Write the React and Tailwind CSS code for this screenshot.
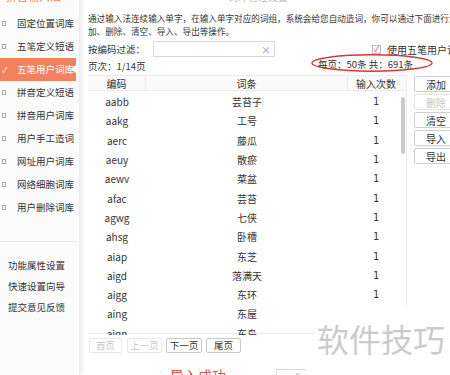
import React from 'react'

const font = '"Noto Sans CJK SC", "Microsoft YaHei", sans-serif'

const navItems = [
  { label: '固定位置词库' },
  { label: '五笔定义短语' },
  { label: '五笔用户词库', active: true },
  { label: '拼音定义短语' },
  { label: '拼音用户词库' },
  { label: '用户手工造词' },
  { label: '网址用户词库' },
  { label: '网络细胞词库' },
  { label: '用户删除词库' },
]

const extraItems = ['功能属性设置', '快速设置向导', '提交意见反馈']

const rows = [
  ['aabb', '芸苔子'],
  ['aakg', '工号'],
  ['aerc', '藤瓜'],
  ['aeuy', '散瘀'],
  ['aewv', '菜盆'],
  ['afac', '芸苔'],
  ['agwg', '七侠'],
  ['ahsg', '卧槽'],
  ['aiap', '东芝'],
  ['aigd', '落满天'],
  ['aigg', '东环'],
  ['aing', '东屋'],
  ['aiqn', '东岛'],
]

function SideItem({ label, active }) {
  if (active) {
    return (
      <div className="relative h-[23px] flex items-center bg-[#f2825f] text-white mr-[3px] whitespace-nowrap">
        <span className="w-[17px] pl-[2px] text-[8px] leading-none">✓</span>
        <span>{label}</span>
        <span className="absolute right-[-1px] top-[6px] w-0 h-0 border-y-[5px] border-y-transparent border-r-[6px] border-r-white" />
      </div>
    )
  }
  return (
    <div className="h-[23px] flex items-center text-[#333] whitespace-nowrap">
      <span className="w-[17px] pl-[2px]">
        <span className="block w-[4px] h-[5px] border border-[#aaa]" />
      </span>
      <span>{label}</span>
    </div>
  )
}

function SideButton({ children, disabled }) {
  return (
    <div
      className={`h-[16px] w-[44px] flex items-center justify-center border rounded-[2px] text-[10px] ${
        disabled ? 'border-[#e6e6e6] text-[#c8c8c8]' : 'border-[#cfcfcf] text-[#333]'
      }`}
    >
      {children}
    </div>
  )
}

function PageButton({ children, disabled, w }) {
  return (
    <div
      className={`h-[15px] ${w} flex items-center justify-center border rounded-[2px] text-[9.5px] whitespace-nowrap ${
        disabled ? 'border-[#e8e8e8] text-[#c8c8c8]' : 'border-[#c8c8c8] text-[#333]'
      }`}
    >
      {children}
    </div>
  )
}

export default function App() {
  return (
    <div
      className="w-[450px] h-[375px] overflow-hidden flex bg-white text-[9.5px]"
      style={{ fontFamily: font }}
    >
      {/* Sidebar */}
      <div className="w-[80px] shrink-0 bg-[#fbfbfb] shadow-[2px_0_4px_rgba(0,0,0,0.08)] border-r border-[#ececec] z-10">
        <div className="h-[12px] overflow-hidden">
          <div className="mt-[-12px] pl-[6px] text-[#f2825f] text-[11px] whitespace-nowrap">拼音输入法</div>
        </div>
        {navItems.map((it) => (
          <SideItem key={it.label} {...it} />
        ))}
        <div className="h-[22px]" />
        <div className="border-t border-[#e8e8e8] mr-[2px]" />
        <div className="pt-[13px]">
          {extraItems.map((t) => (
            <div key={t} className="h-[21px] flex items-center pl-[8px] text-[#333] whitespace-nowrap">
              {t}
            </div>
          ))}
        </div>
      </div>

      {/* Main */}
      <div className="flex-1 relative pl-[8px]">
        <div className="h-[8px] overflow-hidden">
          <div className="mt-[-11px] ml-[140px] text-[#bbb] text-[10px] whitespace-nowrap">词库管理设置</div>
        </div>
        <div className="text-[8.6px] leading-[13px] text-[#333] whitespace-nowrap mt-[4px]">
          <div>通过输入法连续输入单字，在输入单字对应的词组，系统会给您自动造词，你可以通过下面进行添</div>
          <div>加、删除、清空、导入、导出等操作。</div>
        </div>

        {/* Filter row */}
        <div className="flex items-center mt-[3px] h-[16px] whitespace-nowrap">
          <span className="w-[65px] text-[#333]">按编码过滤：</span>
          <div className="w-[122px] h-[16px] border border-[#d9d9d9] flex items-center justify-end pr-[3px] text-[#999] text-[10px]">
            ×
          </div>
          <div className="ml-[97px] w-[9px] h-[9px] border border-[#bbb] flex items-center justify-center text-[#e0443a] text-[8px] leading-none">
            ✓
          </div>
          <span className="ml-[6px] text-[#333] text-[10px]">使用五笔用户词库</span>
        </div>

        {/* Page info */}
        <div className="relative flex h-[18px] items-center whitespace-nowrap">
          <span className="text-[#333] mt-[1px]">页次：1/14页</span>
          <span className="absolute left-[230px] top-[0px] text-[#333]">每页：50条 共：691条</span>
          <svg className="absolute left-[222px] top-[-4px]" width="124" height="20" viewBox="0 0 124 20">
            <ellipse cx="62" cy="10" rx="60" ry="8.2" fill="none" stroke="#d0393a" strokeWidth="1.4" />
          </svg>
        </div>

        <div className="flex">
          {/* Table */}
          <div className="w-[319px] h-[260px] overflow-hidden relative border-r border-[#ebebeb]">
            <div className="flex h-[16px] items-center border-y border-[#ebebeb] bg-[#fafafa] text-[#333] text-[10px]">
              <div className="w-[58px] text-center border-r border-[#ebebeb]">编码</div>
              <div className="w-[202px] text-center border-r border-[#ebebeb]">词条</div>
              <div className="w-[56px] text-center">输入次数</div>
            </div>
            <div className="pt-[1px] text-[10px]">
              {rows.map(([code, word]) => (
                <div key={code} className="flex h-[19.3px] items-center text-[#333]">
                  <div className="w-[58px] text-center">{code}</div>
                  <div className="w-[202px] text-center">{word}</div>
                  <div className="w-[56px] text-center" style={{ fontFamily: '"DejaVu Sans Mono", monospace' }}>1</div>
                </div>
              ))}
            </div>
            <div className="absolute right-[1px] top-[22px] w-[4px] h-[57px] rounded-full bg-[#c9c9c9]" />
          </div>

          {/* Buttons */}
          <div className="ml-[7px] flex flex-col gap-[2px] pt-[1px]">
            <SideButton>添加</SideButton>
            <SideButton disabled>删除</SideButton>
            <SideButton>清空</SideButton>
            <SideButton>导入</SideButton>
            <SideButton>导出</SideButton>
          </div>
        </div>

        <div className="w-[240px] border-t border-[#ebebeb] mt-[-2px]" />

        {/* Pagination */}
        <div className="flex mt-[4px] pl-[1px]">
          <PageButton disabled w="w-[33px]">首页</PageButton>
          <div className="ml-[5px]"><PageButton disabled w="w-[35px]">上一页</PageButton></div>
          <div className="ml-[4px]"><PageButton w="w-[36px]">下一页</PageButton></div>
          <div className="ml-[4px]"><PageButton w="w-[35px]">尾页</PageButton></div>
        </div>

        <div className="flex items-start mt-[8px] whitespace-nowrap">
          <span className="ml-[82px] text-[14px] text-[#e5534b] leading-[16px] mt-[6px]">导入成功</span>
          <div className="ml-[50px] mt-[8px] w-[30px] h-[14px] border-l border-t border-[#d6d6d6] flex justify-end pr-[6px] text-[6px] text-[#999]">≋</div>
        </div>

        {/* Watermark (white badge over the page) */}
        <div className="absolute left-[235px] top-[305px] w-[135px] h-[70px] bg-white pl-[2px] pt-[15px] whitespace-nowrap">
          <span className="text-[32px] leading-[36px] text-[#cbcbcb]">软件技巧</span>
        </div>
      </div>
    </div>
  )
}
